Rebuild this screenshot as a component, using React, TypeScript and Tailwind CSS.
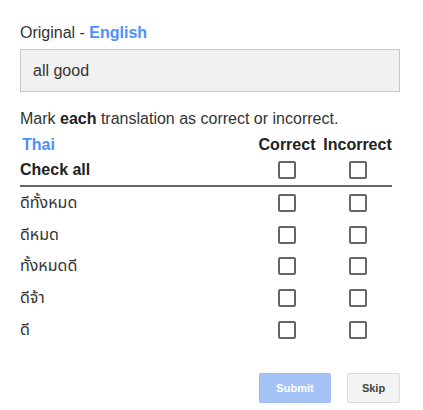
import React from "react";

const rows = ["ดีทั้งหมด", "ดีหมด", "ทั้งหมดดี", "ดีจ้า", "ดี"];

function Box() {
  return <div className="w-[18px] h-[18px] border-2 border-[#666] rounded-[2px] bg-white" />;
}

function Row({ label, className, labelClass }: { label: React.ReactNode; className: string; labelClass?: string }) {
  return (
    <div className={"flex items-center " + className}>
      <div className={"flex-1 " + (labelClass ?? "")}>{label}</div>
      <div className="w-[58px] flex justify-center">
        <Box />
      </div>
      <div className="w-[69px] ml-[7px] flex justify-center">
        <Box />
      </div>
    </div>
  );
}

export default function App() {
  return (
    <div
      className="w-[423px] h-[410px] bg-white text-[#333] text-[16px] leading-[18px] pl-[20px] pt-[24px]"
      style={{ fontFamily: '"Liberation Sans", Arial, "Noto Sans Thai", Tahoma, sans-serif' }}
    >
      <div className="w-[380px]">
        <div>
          Original - <span className="font-bold text-[#4d90fe]">English</span>
        </div>
        <div className="mt-[7px] h-[43px] border border-[#c8c8c8] bg-[#f1f1f1] flex items-center pl-[12px]">
          all good
        </div>
        <div className="mt-[18px]">
          Mark <span className="font-bold text-[#222]">each</span> translation as correct or incorrect.
        </div>
        <div className="w-[372px] mt-[5px]">
          <div className="h-[24px] flex items-center font-bold">
            <div className="flex-1 text-[#4d90fe] pl-[2px]">Thai</div>
            <div className="w-[58px] text-center text-[#222]">Correct</div>
            <div className="w-[69px] ml-[7px] text-center text-[#222]">Incorrect</div>
          </div>
          <Row
            label="Check all"
            labelClass="font-bold text-[#222]"
            className="h-[30px] border-b-2 border-[#666] pb-[2px]"
          />
          {rows.map((r) => (
            <Row key={r} label={r} className="h-[31.75px]" />
          ))}
        </div>
        <div className="mt-[27px] flex justify-end gap-[16px]">
          <div className="h-[30px] w-[72px] flex items-center justify-center rounded-[2px] border border-[#9fbcf0] bg-[#a4c2f4] text-white font-bold text-[11px]">
            Submit
          </div>
          <div className="h-[30px] w-[53px] flex items-center justify-center rounded-[2px] border border-[#dcdcdc] bg-[#f3f3f3] text-[#444] font-bold text-[11px]">
            Skip
          </div>
        </div>
      </div>
    </div>
  );
}
